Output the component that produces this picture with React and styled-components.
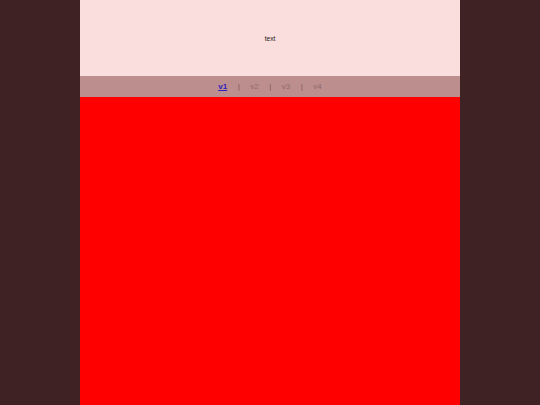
import React from "react";
import styled, { createGlobalStyle } from "styled-components";

const GlobalStyle = createGlobalStyle`
	html, body {
		margin: 0;
		padding: 0;
		background: #3f2324;
		font-family: "Liberation Sans", Arial, sans-serif;
	}
`;

export default function App() {
	return (
		<>
			<GlobalStyle />
			<Page>
				<Header>
					<HeaderText>text</HeaderText>
				</Header>
				<Nav>
					<NavLink href="#" active>
						v1
					</NavLink>
					<Separator>|</Separator>
					<NavLink href="#">v2</NavLink>
					<Separator>|</Separator>
					<NavLink href="#">v3</NavLink>
					<Separator>|</Separator>
					<NavLink href="#">v4</NavLink>
				</Nav>
				<Content />
			</Page>
		</>
	);
}

const Page = styled.div`
	width: 380px;
	margin: 0 auto;
	min-height: 100vh;
	display: flex;
	flex-direction: column;
`;

const Header = styled.header`
	height: 76px;
	background: #fadddd;
	display: flex;
	align-items: center;
	justify-content: center;
`;

const HeaderText = styled.span`
	font-size: 6.5px;
	color: #111;
`;

const Nav = styled.nav`
	height: 21px;
	background: #bd8e8e;
	display: flex;
	align-items: center;
	justify-content: center;
	gap: 10.5px;
	font-size: 8px;
`;

const NavLink = styled.a`
	color: ${(p) => (p.active ? "#2a1fc0" : "#8c6c6c")};
	font-weight: ${(p) => (p.active ? "bold" : "normal")};
	text-decoration: ${(p) => (p.active ? "underline" : "none")};
`;

const Separator = styled.span`
	color: #7a5656;
`;

const Content = styled.main`
	flex: 1;
	background: #ff0000;
`;
